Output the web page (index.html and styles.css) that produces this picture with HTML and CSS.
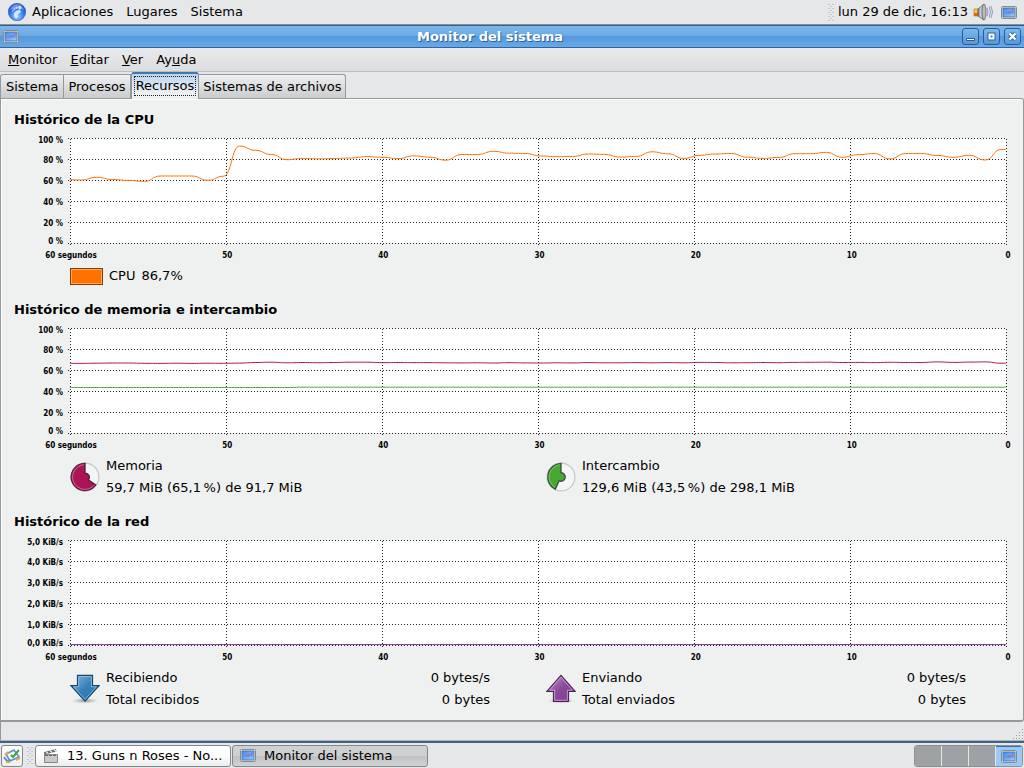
FILE: index.html
```html
<!DOCTYPE html>
<html lang="es">
<head>
<meta charset="utf-8">
<title>Monitor del sistema</title>
<link rel="stylesheet" href="styles.css">
<script src="charts.js" defer></script>
</head>
<body>
<svg class="defs" aria-hidden="true">
  <defs>
    <linearGradient id="screen" x1="0" y1="0" x2="1" y2="1"><stop offset="0" stop-color="#3f8ff0"/><stop offset="1" stop-color="#90ccff"/></linearGradient>
    <radialGradient id="ball" cx=".5" cy=".75" r=".7"><stop offset="0" stop-color="#9fd0ff"/><stop offset=".5" stop-color="#3d86f5"/><stop offset="1" stop-color="#1748c8"/></radialGradient>
    <linearGradient id="blue" x1="0" y1="0" x2="1" y2="1"><stop offset="0" stop-color="#8ab8dc"/><stop offset=".5" stop-color="#3580b8"/><stop offset="1" stop-color="#2676b0"/></linearGradient>
    <linearGradient id="purple" x1="0" y1="0" x2="1" y2="1"><stop offset="0" stop-color="#c79bd0"/><stop offset=".5" stop-color="#8a4a9a"/><stop offset="1" stop-color="#7c3a8e"/></linearGradient>
    <linearGradient id="cone" x1="0" y1="0" x2="1" y2="0"><stop offset="0" stop-color="#777"/><stop offset=".5" stop-color="#ddd"/><stop offset="1" stop-color="#777"/></linearGradient>
    <radialGradient id="shade"><stop offset="0" stop-color="#000" stop-opacity=".35"/><stop offset="1" stop-color="#000" stop-opacity="0"/></radialGradient>
    <symbol id="monitor" viewBox="0 0 16 13">
      <rect x=".5" y=".5" width="15" height="12" rx="1" fill="#e4e3dd" stroke="#8b8a84"/>
      <rect x="2" y="2" width="12" height="9" fill="url(#screen)" stroke="#2c66ae" stroke-width=".7"/>
      <path d="M3 7h2l1-1 1 2 1-3 1 3 1-3 1 2 1-4v5" fill="none" stroke="#b04c90" stroke-width=".5"/>
    </symbol>
    <symbol id="dots" viewBox="0 0 6 17">
      <path d="M1 0v17M5 0v17" stroke="#a5a7a9" stroke-dasharray="1 3"/>
      <path d="M3 2v15" stroke="#a5a7a9" stroke-dasharray="1 3"/>
    </symbol>
  </defs>
</svg>

<header class="panel">
  <svg class="ball" viewBox="0 0 18 18" aria-hidden="true"><circle cx="9" cy="9" r="8.7" fill="url(#ball)" stroke="#2458c9" stroke-width=".6"/><path d="M2 7Q4 1 9 1t7 6Q9 3 2 7z" fill="#fff" opacity=".35"/><path d="M8 8q3-2 5 0 0 2-3 3-1 1 0 3-1 2-3 1-2-2-1-5z" fill="#e4f1ff" opacity=".85"/><g fill="#e4f1ff" opacity=".85"><ellipse cx="11.8" cy="4.8" rx="1.5" ry="2"/><circle cx="8.6" cy="4.9" r="1.1"/><circle cx="6.4" cy="6" r="1"/><circle cx="4.8" cy="7.7" r=".8"/></g></svg>
  <nav class="panel-menu"><button>Aplicaciones</button><button>Lugares</button><button>Sistema</button></nav>
  <svg class="handle" aria-hidden="true"><use href="#dots"/></svg>
  <button class="clock">lun 29 de dic, 16:13</button>
  <svg class="speaker" viewBox="0 0 20 18" aria-hidden="true"><path d="M1 6h4v7H1z" fill="#f4d030" stroke="#9a6a10" stroke-width=".6"/><path d="M1 10h4v3H1z" fill="#e06414"/><path d="M5 6l6-5v16l-6-4z" fill="url(#cone)" stroke="#555" stroke-width=".7"/><ellipse cx="11" cy="9" rx="2" ry="8" fill="#bbb" stroke="#555" stroke-width=".7"/><path d="M14 5q2 4 0 8M16 3.500q3 5.500 0 11M18 3q3 6 0 12" fill="none" stroke="#8791c8" stroke-width=".9"/></svg>
  <svg class="mini" aria-hidden="true"><use href="#monitor"/></svg>
</header>

<main class="window">
  <div class="titlebar">
    <svg class="mini" aria-hidden="true"><use href="#monitor"/></svg>
    <h1>Monitor del sistema</h1>
    <div class="controls">
      <button aria-label="Minimizar"><svg viewBox="0 0 15 15"><path d="M3.500 9.500h8v2h-8z" fill="#fff" stroke="#2c5c96"/></svg></button>
      <button aria-label="Maximizar"><svg viewBox="0 0 15 15"><path d="M5.500 5.500h4v4h-4z" fill="none" stroke="#2c5c96" stroke-width="4"/><path d="M5.500 5.500h4v4h-4z" fill="#3d78bb" stroke="#fff" stroke-width="2"/></svg></button>
      <button aria-label="Cerrar"><svg viewBox="0 0 15 15"><path d="M4.500 4.500l6 6m0-6l-6 6" stroke="#2c5c96" stroke-width="4"/><path d="M4.500 4.500l6 6m0-6l-6 6" stroke="#fff" stroke-width="2.400"/></svg></button>
    </div>
  </div>
  <nav class="menubar"><button><u>M</u>onitor</button><button><u>E</u>ditar</button><button><u>V</u>er</button><button>Ay<u>u</u>da</button></nav>
  <div class="tabs" role="tablist">
    <button role="tab" aria-selected="false">Sistema</button><button role="tab" aria-selected="false">Procesos</button><button role="tab" aria-selected="true"><span>Recursos</span></button><button role="tab" aria-selected="false">Sistemas de archivos</button>
  </div>

  <div class="page" role="tabpanel">
    <section>
      <h2>Histórico de la CPU</h2>
      <div class="chart">
        <ul class="scale"><li>100 %</li><li>80 %</li><li>60 %</li><li>40 %</li><li>20 %</li><li>0 %</li></ul>
        <div class="plot" data-chart="cpu"></div>
        <ul class="times"><li>60 segundos</li><li>50</li><li>40</li><li>30</li><li>20</li><li>10</li><li>0</li></ul>
      </div>
      <div class="legend single">
        <button class="swatch" id="cpu-color" aria-label="Color de la CPU"></button>
        <label for="cpu-color">CPU</label><span>86,7%</span>
      </div>
    </section>

    <section>
      <h2>Histórico de memoria e intercambio</h2>
      <div class="chart">
        <ul class="scale"><li>100 %</li><li>80 %</li><li>60 %</li><li>40 %</li><li>20 %</li><li>0 %</li></ul>
        <div class="plot" data-chart="memory"></div>
        <ul class="times"><li>60 segundos</li><li>50</li><li>40</li><li>30</li><li>20</li><li>10</li><li>0</li></ul>
      </div>
      <div class="legend">
        <div class="item">
          <button class="icon" aria-label="Color de la memoria"><svg viewBox="0 0 32 32"><circle cx="16" cy="16" r="14.800" fill="#f4f5f5" stroke="#c2c4c4" stroke-width="1.200"/><path d="M16 1.500V12a4.200 4.200 0 0 1 3.500 7l8 5.500A14.500 14.500 0 1 1 16 1.500z" fill="#ad1457" stroke="#54243c" stroke-width="1.400"/><path d="M14.800 2.900A13.200 13.200 0 1 0 26 24.600" fill="none" stroke="#d685a8" stroke-width=".8"/></svg></button>
          <div class="lines"><p>Memoria</p><p>59,7 MiB (65,1&#8201;%) de 91,7 MiB</p></div>
        </div>
        <div class="item">
          <button class="icon" aria-label="Color del intercambio"><svg viewBox="0 0 32 32"><circle cx="16" cy="16" r="14.800" fill="#f4f5f5" stroke="#c2c4c4" stroke-width="1.200"/><path d="M16 1.500V11.500a4.500 4.500 0 1 1-2 8.500L10 29A14.500 14.500 0 0 1 16 1.500z" fill="#49a835" stroke="#38523a" stroke-width="1.400"/><path d="M14.800 2.900A13.200 13.200 0 0 0 9.500 27.200" fill="none" stroke="#8ed07c" stroke-width=".8"/></svg></button>
          <div class="lines"><p>Intercambio</p><p>129,6 MiB (43,5&#8201;%) de 298,1 MiB</p></div>
        </div>
      </div>
    </section>

    <section>
      <h2>Histórico de la red</h2>
      <div class="chart">
        <ul class="scale"><li>5,0 KiB/s</li><li>4,0 KiB/s</li><li>3,0 KiB/s</li><li>2,0 KiB/s</li><li>1,0 KiB/s</li><li>0,0 KiB/s</li></ul>
        <div class="plot" data-chart="network"></div>
        <ul class="times"><li>60 segundos</li><li>50</li><li>40</li><li>30</li><li>20</li><li>10</li><li>0</li></ul>
      </div>
      <div class="legend">
        <div class="item">
          <button class="icon" aria-label="Color de recepción"><svg viewBox="0 0 32 32"><ellipse cx="16" cy="28.500" rx="14" ry="3" fill="url(#shade)"/><path d="M8 1.500h16v10.800h7L16 29 1 12.300h7z" fill="url(#blue)" stroke="#1c4468" stroke-width="1.300"/><path d="M9.200 2.700h13.600v10.800h5.500L16 27.200 3.700 13.500h5.500z" fill="none" stroke="#9cc8e8" stroke-width=".8"/></svg></button>
          <div class="lines"><p>Recibiendo</p><p>Total recibidos</p></div>
          <div class="lines values"><p>0 bytes/s</p><p>0 bytes</p></div>
        </div>
        <div class="item">
          <button class="icon" aria-label="Color de envío"><svg viewBox="0 0 32 32"><ellipse cx="16" cy="28.500" rx="14" ry="3" fill="url(#shade)"/><path d="M8 29.200h16V18.500h7L16 1.500 1 18.500h7z" fill="url(#purple)" stroke="#4c2458" stroke-width="1.300"/><path d="M9.200 28h13.600V17.300h5.500L16 3.300 3.700 17.300h5.500z" fill="none" stroke="#d8b4e0" stroke-width=".8"/></svg></button>
          <div class="lines"><p>Enviando</p><p>Total enviados</p></div>
          <div class="lines values"><p>0 bytes/s</p><p>0 bytes</p></div>
        </div>
      </div>
    </section>
  </div>
  <div class="statusbar"><svg class="grip" viewBox="0 0 12 12" aria-hidden="true"><path d="M1 10.500h11M4 7.500h8M7 4.500h5M10 1.500h2" stroke="#96989a" stroke-dasharray="1 2"/></svg></div>
</main>

<footer class="taskbar">
  <button class="desktop" aria-label="Mostrar el escritorio"><svg viewBox="0 0 18 16"><path d="M3 6l8-4 5 7-9 4z" fill="#f4f6f8" stroke="#5f8fd0" stroke-width="1.600"/><path d="M1 9l3 4 4-1" fill="none" stroke="#5f8fd0" stroke-width="2"/><path d="M2 7l3-3M3 14h4M13 12l4-2" stroke="#e8a840" stroke-width="2"/><path d="M8 7l2 2 6-7" fill="none" stroke="#3fa348" stroke-width="2"/></svg></button>
  <svg class="handle" aria-hidden="true"><use href="#dots"/></svg>
  <button class="task"><svg class="clap" viewBox="0 0 16 14" aria-hidden="true"><path d="M1.500 5.500h13v8h-13z" fill="#c9c9c7" stroke="#888"/><path d="M1 3l12-3 .5 2.500-12 3z" fill="#666"/><path d="M3 2.500l2 2M7 1.500l2 2M11 .5l2 2" stroke="#eee" stroke-width="1.300"/><path d="M2 6.500h12" stroke="#666" stroke-dasharray="3 1"/></svg><span>13. Guns n Roses - No...</span></button>
  <button class="task active"><svg class="mini" aria-hidden="true"><use href="#monitor"/></svg><span>Monitor del sistema</span></button>
  <div class="spaces"><button aria-label="Área 1"></button><button aria-label="Área 2"></button><button aria-label="Área 3"></button><button class="current" aria-label="Área 4"><svg class="mini" aria-hidden="true"><use href="#monitor"/></svg></button></div>
</footer>
</body>
</html>
```

FILE: charts.js
```js
// Plot area units: 936 wide, 105 high, newest sample at the right edge.
const series = {
  cpu: [{
    color: "#ff7208",
    y: [41.5, 42, 39.3, 41.5, 42.4, 43.4, 38, 38, 38, 42.3, 38.2, 8, 12.3, 16.5, 21.7, 20.4,
      20.9, 20.5, 20, 18.6, 19.3, 20.6, 17.8, 19.2, 22.2, 16.5, 16.5, 13.3, 15.2, 15.5, 18, 18.7,
      18.4, 16, 16.4, 19.1, 18.4, 13.8, 15.8, 20.4, 17.3, 16, 15.5, 19.2, 20.4, 19.4, 15.7, 15.7,
      14.4, 19.3, 16.7, 15.5, 20.9, 15.5, 15.6, 17.5, 19.3, 17.3, 22, 11.5, 12]
  }],
  memory: [
    { color: "#ad1457", y: [35.3, 35.4, 35.2, 35, 35, 35.3, 35.4, 35.2, 35.4, 35.2, 35.3, 35.1, 34.5, 34.2, 34.8, 34.5, 34.7, 34.5, 34.2, 34.2, 34.6, 34.5, 34.6, 34.6, 34.8, 34.9, 34.8, 35, 34.7, 34.9, 35, 34.8, 34.9, 34.6, 34.8, 34.8, 34.6, 34.8, 34.6, 34.8, 34.4, 34.5, 34.8, 34.7, 34.5, 34.7, 34.4, 34.3, 34.2, 34.5, 34.4, 34.6, 34.3, 34.5, 34.5, 33.9, 34.4, 34.1, 33.9, 35.2, 35.3] },
    { color: "#49a835", y: Array.from({ length: 61 }, (_, i) => i < 15 ? 59.5 : 59.2) }
  ],
  network: [{ color: "#7c2f96", y: Array(61).fill(104.5) }]
};

const step = 936 / 59;

function curve(values) {
  return values.map((y, i) => {
    const x = (i * step - 5).toFixed(1);
    if (!i) return `M${x} ${y}`;
    const mid = ((i - 0.5) * step - 5).toFixed(1);
    return `C${mid} ${values[i - 1]} ${mid} ${y} ${x} ${y}`;
  }).join("");
}

for (const plot of document.querySelectorAll(".plot")) {
  const down = [0, 1, 2, 3, 4, 5, 6]
    .map(i => `<line x1="${i * 100 / 6}%" x2="${i * 100 / 6}%" y1="0" y2="108"/>`).join("");
  const across = [0, 1, 2, 3, 4, 5]
    .map(i => `<line x1="-3" x2="100%" y1="${i * 21}" y2="${i * 21}"/>`).join("");
  const lines = series[plot.dataset.chart]
    .map(s => `<path d="${curve(s.y)}" stroke="${s.color}"/>`).join("");
  plot.innerHTML = `<svg class="grid"><g transform="translate(.5 .5)">${down}${across}</g></svg>
    <svg class="curves" viewBox="0 0 936 105" preserveAspectRatio="none">${lines}</svg>`;
}
```

FILE: styles.css
```css
* { box-sizing: border-box; }
body { margin: 0; min-height: 100vh; display: flex; flex-direction: column; background: #e6e7e9; color: #000; font: 13px/22px "DejaVu Sans", sans-serif; }
button { font: inherit; color: inherit; border: 0; padding: 0; background: none; white-space: nowrap; }
svg { display: block; flex: none; }
ul, h1, h2, p { margin: 0; padding: 0; list-style: none; }
.defs { position: absolute; width: 0; height: 0; }
.mini { width: 16px; height: 13px; }
.handle { width: 6px; height: 17px; }

.panel { display: flex; align-items: center; height: 25px; padding: 0 7px 0 8px; border-bottom: 1px solid #8d9080; }
.ball { width: 18px; height: 18px; margin-right: 6px; }
.panel-menu { display: flex; gap: 13px; flex: 1; }
.clock { margin: 0 5px 0 4px; }
.speaker { width: 20px; height: 18px; margin-right: 8px; }

.window { flex: 1; display: flex; flex-direction: column; }
.titlebar { display: grid; grid-template-columns: 20px 1fr 64px; align-items: center; height: 23px; padding: 0 3px; background: linear-gradient(#7cb6ec, #6aabe6 45%, #5698da 50%, #68a8e6); border-top: 1px solid #2f5f92; border-bottom: 1px solid #2d64a6; }
h1 { font-size: 13px; line-height: 20px; text-align: center; color: #fff; text-shadow: 1px 1px #2e5f98; }
.controls { display: flex; gap: 4px; justify-content: flex-end; }
.controls button { width: 17px; height: 17px; border: 1px solid #2c5c96; border-radius: 3px; background: linear-gradient(#7db8ef, #5698da); }
.menubar { display: flex; gap: 13px; height: 24px; padding: 0 8px; border-bottom: 1px solid #bcbdbf; background: linear-gradient(#e9eaeb, #dcddde); }

.tabs { display: flex; align-items: flex-end; height: 26px; }
.tabs button { height: 24px; padding: 0 4px; border: 1px solid #96989b; border-bottom: 0; border-left-width: 0; background: linear-gradient(#eeeff0, #d8d9db 60%, #cbccce); }
.tabs button:first-child { padding: 0 5px; border-left-width: 1px; border-top-left-radius: 3px; }
.tabs button:last-child { padding: 0 4px; border-top-right-radius: 3px; }
.tabs button[aria-selected="true"] { position: relative; z-index: 1; height: 27px; margin: 0 0 -1px; padding: 0 2px 1px; border: 1px solid #8f979e; border-top: 2px solid #4078ae; border-bottom: 0; border-radius: 3px 3px 0 0; background: linear-gradient(#bcd6ef, #eff1f0 80%); }
.tabs span { display: block; padding: 0 1px; line-height: 18px; border: 1px dotted #222; }

.page { flex: 1; display: flex; flex-direction: column; gap: 11px; padding: 10px 17px 6px 13px; border: 1px solid #96989b; border-bottom-width: 2px; border-radius: 0 3px 3px 0; background: #eff1f0; box-shadow: inset 1px 1px #fff; }
h2 { font-size: 13px; line-height: 22px; }
.chart { display: grid; grid-template-columns: 49px 1fr; column-gap: 7px; font-family: "DejaVu Sans Condensed", "DejaVu Sans", sans-serif; font-size: 8px; font-weight: bold; line-height: 12px; }
.scale { grid-row: 1 / 3; display: grid; grid-template-rows: 18px repeat(4, 21px) 15px; align-items: center; justify-items: end; margin-top: 1px; white-space: nowrap; }
.plot { display: grid; height: 105px; margin-top: 7px; background: #fff; }
.plot svg { grid-area: 1 / 1; width: 100%; height: 105px; }
.plot .grid { overflow: visible; }
.grid line { stroke: #222; stroke-dasharray: 1 2; shape-rendering: crispEdges; }
.curves path { fill: none; stroke-width: 1px; vector-effect: non-scaling-stroke; }
.times { grid-column: 2; display: flex; justify-content: space-between; margin: 7px -2px 0 1px; }
.times li { width: 0; display: flex; justify-content: center; white-space: nowrap; }

.legend { display: grid; grid-template-columns: 1fr 1fr; gap: 56px; padding: 3px 40px 1px 56px; }
.legend.single { display: flex; align-items: center; gap: 6px; }
.swatch { width: 33px; height: 17px; border: 1px solid #8a3c00; background: #ff7200; box-shadow: inset 0 0 0 1px #ffa85c; }
.item { display: flex; align-items: center; gap: 6px; }
.icon { width: 30px; height: 30px; flex: none; }
.lines { white-space: nowrap; }
.values { margin-left: auto; text-align: right; }

.statusbar { height: 19px; display: flex; justify-content: flex-end; align-items: flex-end; border-left: 1px solid #96989b; border-bottom: 1px solid #b0b2b4; }
.grip { width: 12px; height: 12px; }
.taskbar { display: flex; align-items: center; gap: 4px; height: 27px; padding: 0 1px; border-top: 2px solid #3f6389; }
.taskbar button { display: flex; align-items: center; height: 22px; }
.taskbar .desktop { width: 22px; justify-content: center; border: 1px solid #85878a; border-radius: 3px; background: linear-gradient(#fff, #eee); }
.desktop svg { width: 18px; height: 16px; }
.taskbar .handle { margin-right: -2px; }
.taskbar .task { flex: 0 1 196px; gap: 8px; padding: 0 7px; margin-right: -3px; border: 1px solid #85878a; border-radius: 3px; background: linear-gradient(#fff 45%, #ececec); }
.clap { width: 16px; height: 14px; }
.taskbar .task.active { background: linear-gradient(#cfd0d2 50%, #bfc0c2 50%, #d2d3d4); }
.spaces { display: flex; margin-left: auto; border: 1px solid #8f9193; border-radius: 3px; overflow: hidden; gap: 1px; background: #e6e7e9; }
.taskbar .spaces button { width: 26px; height: 20px; justify-content: center; background: #9fa2a4; }
.taskbar .spaces .current { background: #9cc8f8; border-top: 1px solid #2f6cb0; }
```
